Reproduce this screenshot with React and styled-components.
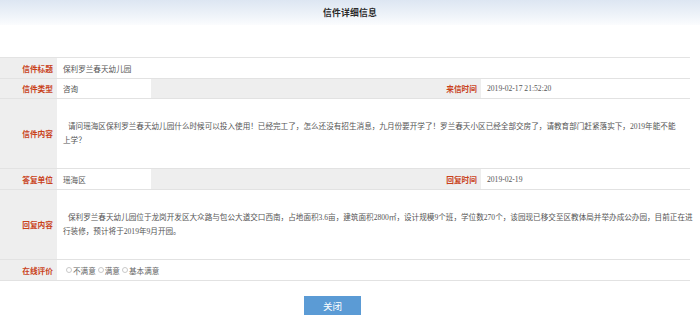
import React from "react";
import styled, { createGlobalStyle } from "styled-components";

const GlobalStyle = createGlobalStyle`
  html, body {
    margin: 0;
    padding: 0;
    background: #ffffff;
  }
  body {
    font-family: "Liberation Serif", "Noto Sans CJK SC", serif;
    color: #555;
  }
`;

const Page = styled.div`
  width: 700px;
  height: 318px;
  display: flex;
  flex-direction: column;
  overflow: hidden;
`;

const Header = styled.div`
  height: 25px;
  display: flex;
  align-items: center;
  justify-content: center;
  background: linear-gradient(to bottom, #dde6f2 0%, #eef3f9 60%, #fbfcfe 100%);
  font-family: "Noto Sans CJK SC", sans-serif;
  font-size: 8.8px;
  font-weight: bold;
  color: #2a2a2a;
  letter-spacing: 0.2px;
`;

const Table = styled.div`
  margin-top: 32px;
  width: 690px;
  display: grid;
  grid-template-columns: 57px 94px 330px 209px;
  grid-template-rows: 21px 20px 70px 21px 70px 21px;
  border-top: 1px solid #e3e3e3;
  border-right: 1px solid #e6e6e6;
  box-sizing: border-box;
`;

const Label = styled.div`
  grid-column: ${(p) => p.$col || "auto"};
  box-sizing: border-box;
  background: #eeeeee;
  border-bottom: 1px solid #e2e2e2;
  display: flex;
  align-items: center;
  justify-content: flex-end;
  padding-right: 4px;
  font-family: "Noto Sans CJK SC", sans-serif;
  font-size: 7.7px;
  font-weight: bold;
  color: #c9421b;
`;

const Value = styled.div`
  grid-column: ${(p) => p.$span || "auto"};
  box-sizing: border-box;
  background: #ffffff;
  border-bottom: 1px solid #e2e2e2;
  display: flex;
  align-items: center;
  padding: 0 ${(p) => p.$padRight ?? 6}px 0 6px;
  font-size: 7.6px;
  color: #555;
  white-space: nowrap;
`;

const Content = styled.div`
  white-space: normal;
  line-height: 14px;
  text-indent: 5px;
  word-break: break-all;
  margin-right: ${(p) => (p.$bleed ? -p.$bleed : 0)}px;
`;

const Options = styled.div`
  display: flex;
  align-items: center;
  padding-left: 3px;
`;

const RadioLabel = styled.label`
  display: flex;
  align-items: center;
  color: #666;
  margin-right: 2px;
`;

const Radio = styled.input`
  appearance: none;
  width: 6px;
  height: 6px;
  margin: 0 1px 0 0;
  border: 1px solid #c9c9c9;
  border-radius: 50%;
  background: #fff;
`;

const Footer = styled.div`
  display: flex;
  justify-content: center;
  padding-right: 35px;
  margin-top: 15px;
`;

const Button = styled.button`
  width: 57px;
  height: 19px;
  border: none;
  background: #5b9bd5;
  color: #ffffff;
  font-family: "Noto Sans CJK SC", sans-serif;
  font-size: 9.5px;
  padding: 0;
`;

const letter =
  "请问瑶海区保利罗兰春天幼儿园什么时候可以投入使用！已经完工了，怎么还没有招生消息，九月份要开学了！罗兰春天小区已经全部交房了，请教育部门赶紧落实下，2019年能不能上学？";

const reply =
  "保利罗兰春天幼儿园位于龙岗开发区大众路与包公大道交口西南，占地面积3.6亩，建筑面积2800㎡，设计规模9个班，学位数270个，该园现已移交至区教体局并举办成公办园，目前正在进行装修，预计将于2019年9月开园。";

export default function App() {
  return (
    <Page>
      <GlobalStyle />
      <Header>信件详细信息</Header>
      <Table>
        <Label>信件标题</Label>
        <Value $span="span 3">保利罗兰春天幼儿园</Value>

        <Label>信件类型</Label>
        <Value>咨询</Value>
        <Label>来信时间</Label>
        <Value>2019-02-17 21:52:20</Value>

        <Label>信件内容</Label>
        <Value $span="span 3" $padRight={10}>
          <Content>{letter}</Content>
        </Value>

        <Label>答复单位</Label>
        <Value>瑶海区</Value>
        <Label>回复时间</Label>
        <Value>2019-02-19</Value>

        <Label>回复内容</Label>
        <Value $span="span 3" $padRight={0}>
          <Content $bleed={6}>{reply}</Content>
        </Value>

        <Label>在线评价</Label>
        <Value $span="span 3">
          <Options>
            {["不满意", "满意", "基本满意"].map((o) => (
              <RadioLabel key={o}>
                <Radio type="radio" name="rate" />
                {o}
              </RadioLabel>
            ))}
          </Options>
        </Value>
      </Table>
      <Footer>
        <Button>关闭</Button>
      </Footer>
    </Page>
  );
}
